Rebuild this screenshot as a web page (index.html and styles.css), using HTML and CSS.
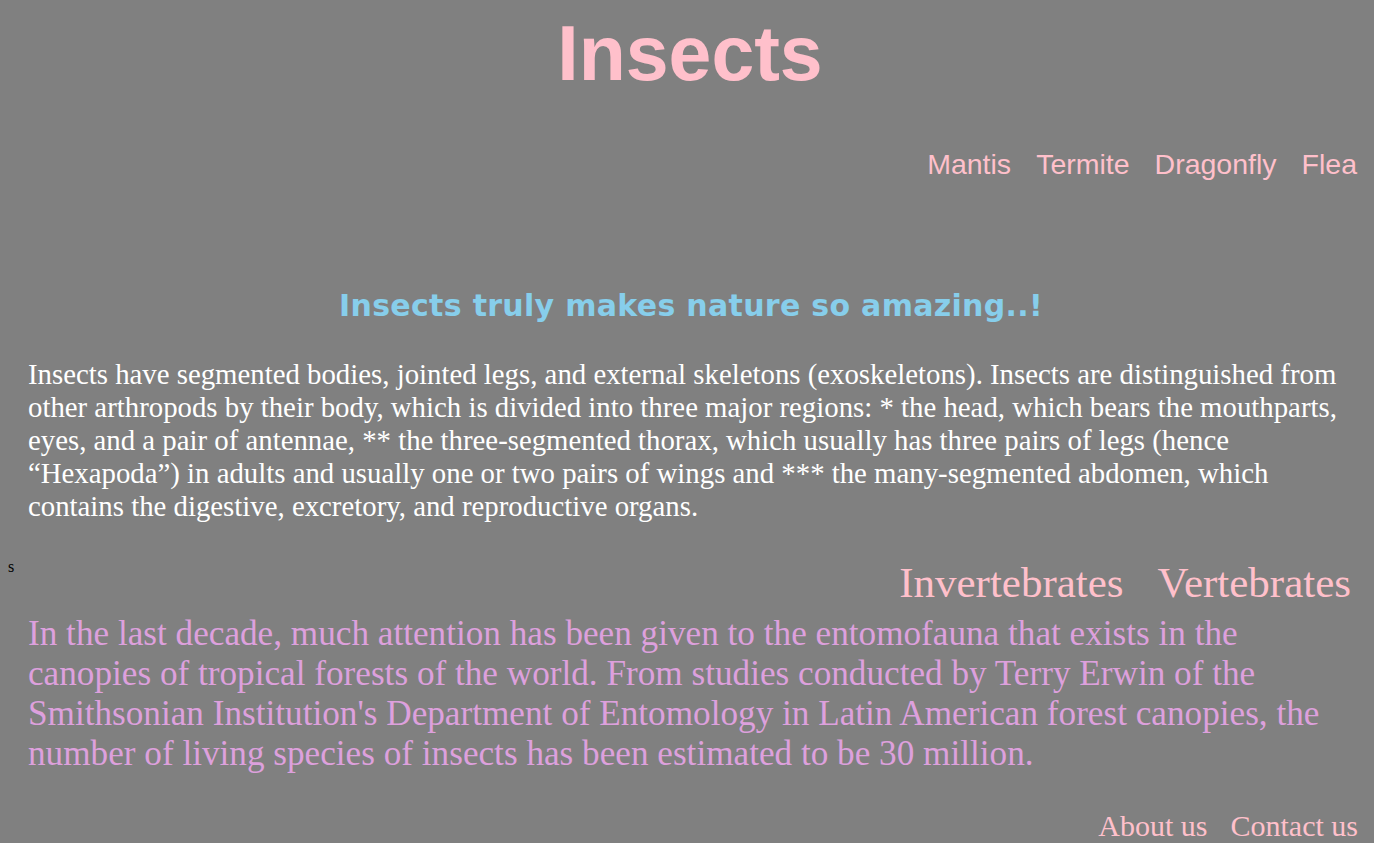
FILE: index.html
```html
<!DOCTYPE html>
<html>
<head>
<meta charset="utf-8">
<title>Insects</title>
<link rel="stylesheet" href="styles.css">
</head>
<body>
<h1 class="title">Insects</h1>
<nav class="topnav">
  <a href="#">Mantis</a>
  <a href="#">Termite</a>
  <a href="#">Dragonfly</a>
  <a href="#">Flea</a>
</nav>
<h2 class="tagline">Insects truly makes nature so amazing..!</h2>
<p class="intro">Insects have segmented bodies, jointed legs, and external skeletons (exoskeletons). Insects are distinguished from other arthropods by their body, which is divided into three major regions: * the head, which bears the mouthparts, eyes, and a pair of antennae, ** the three-segmented thorax, which usually has three pairs of legs (hence “Hexapoda”) in adults and usually one or two pairs of wings and *** the many-segmented abdomen, which contains the digestive, excretory, and reproductive organs.</p>
<div class="row">
  <span class="stray">s</span>
  <nav class="subnav">
    <a href="#">Invertebrates</a>
    <a href="#">Vertebrates</a>
  </nav>
</div>
<p class="fact">In the last decade, much attention has been given to the entomofauna that exists in the canopies of tropical forests of the world. From studies conducted by Terry Erwin of the Smithsonian Institution's Department of Entomology in Latin American forest canopies, the number of living species of insects has been estimated to be 30 million.</p>
<footer class="footnav">
  <a href="#">About us</a>
  <a href="#">Contact us</a>
</footer>
</body>
</html>
```
FILE: styles.css
```css
html, body {
  background: #808080;
}
body {
  margin: 8px;
  font-family: "Liberation Serif", "Times New Roman", serif;
  font-size: 16px;
  color: #000;
}
a {
  color: #ffc0cb;
  text-decoration: none;
}
.title {
  margin: 0;
  padding-left: 6px;
  text-align: center;
  font-family: "Liberation Sans", Arial, sans-serif;
  font-weight: bold;
  font-size: 77px;
  color: #ffc0cb;
  line-height: 90px;
}
.topnav {
  margin-top: 50px;
  display: flex;
  justify-content: flex-end;
  gap: 25px;
  padding-right: 9px;
  font-family: "Liberation Sans", Arial, sans-serif;
  font-size: 28.5px;
  line-height: 33px;
}
.tagline {
  margin: 105px 0 0;
  padding-left: 8px;
  text-align: center;
  font-family: "Comic Sans MS", "DejaVu Sans", sans-serif;
  font-weight: bold;
  font-size: 30px;
  letter-spacing: 0.3px;
  line-height: 40px;
  color: #87ceeb;
}
.intro {
  margin: 32px 0 0;
  padding: 0 20px;
  color: #fff;
  font-size: 28.8px;
  line-height: 33px;
}
.row {
  margin-top: 35px;
  display: flex;
  justify-content: space-between;
  align-items: flex-start;
}
.stray {
  font-size: 16px;
  line-height: 18px;
}
.subnav {
  display: flex;
  gap: 34px;
  padding-right: 15px;
  font-size: 43px;
  line-height: 49px;
}
.fact {
  margin: 7px 0 0;
  padding: 0 20px;
  color: #dda0dd;
  font-size: 35.2px;
  line-height: 40px;
}
.footnav {
  margin-top: 35px;
  display: flex;
  justify-content: flex-end;
  gap: 23px;
  padding-right: 8px;
  font-size: 30px;
  line-height: 34px;
}
```
